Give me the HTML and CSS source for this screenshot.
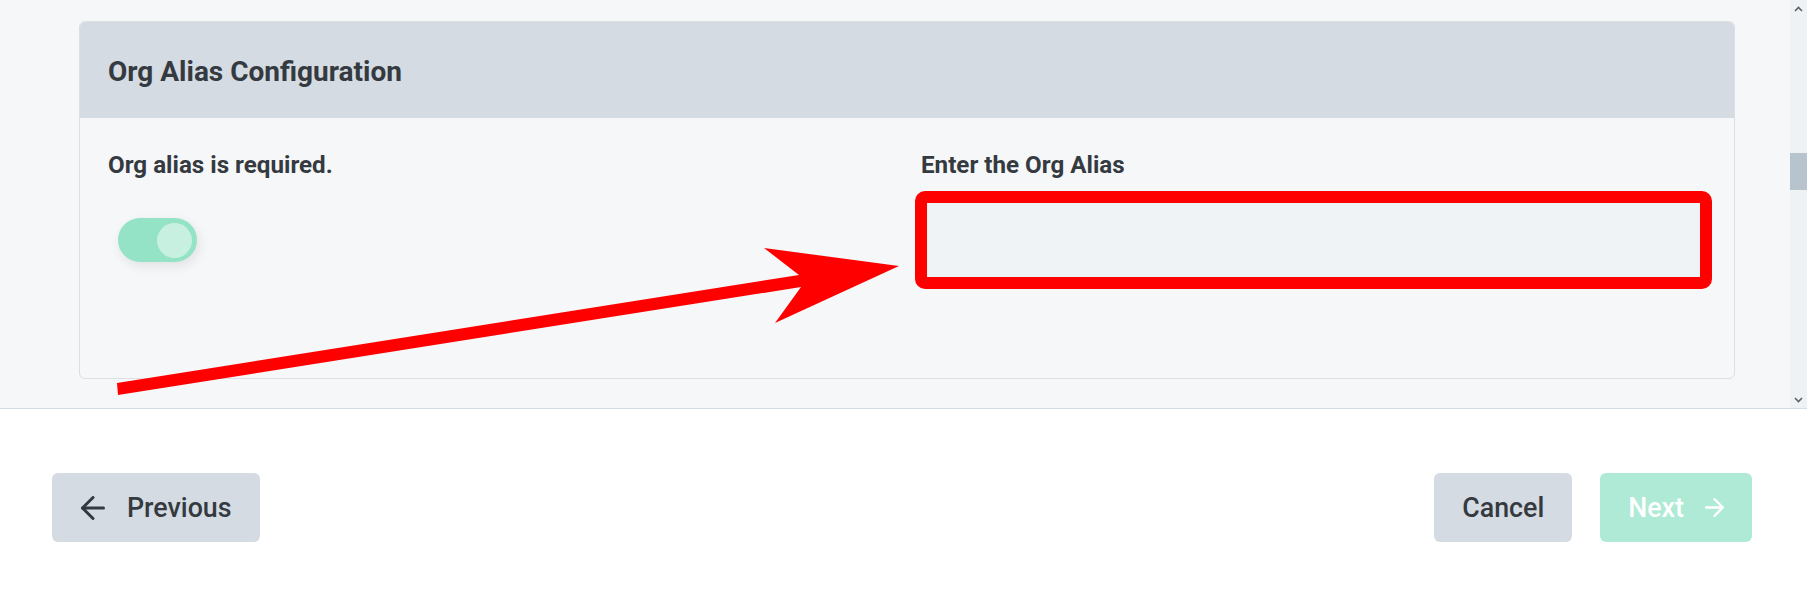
FILE: index.html
```html
<!DOCTYPE html>
<html lang="en">
<head>
<meta charset="utf-8">
<title>Org Alias Configuration</title>
<link rel="stylesheet" href="styles.css">
</head>
<body>
<div class="page">
  <div class="scroll-area">
    <div class="scroll-content">
      <section class="card">
        <header class="card-header">
          <h2 class="card-title">Org Alias Configuration</h2>
        </header>
        <div class="card-body">
          <div class="col">
            <label class="field-label">Org alias is required.</label>
            <span class="toggle"><span class="knob"></span></span>
          </div>
          <div class="col">
            <label class="field-label" for="alias">Enter the Org Alias</label>
            <div class="input-wrap">
              <input id="alias" class="text-input" type="text">
              <span class="highlight"></span>
            </div>
          </div>
        </div>
      </section>
    </div>
    <div class="scrollbar">
      <span class="sb-btn">
        <svg width="9" height="6" viewBox="0 0 9 6"><path d="M1 5 L4.5 1.5 L8 5" fill="none" stroke="#5b6168" stroke-width="1.6"/></svg>
      </span>
      <span class="sb-gap"></span>
      <span class="sb-thumb"></span>
      <span class="sb-btn sb-down">
        <svg width="9" height="6" viewBox="0 0 9 6"><path d="M1 1 L4.5 4.5 L8 1" fill="none" stroke="#5b6168" stroke-width="1.6"/></svg>
      </span>
    </div>
  </div>
  <footer class="footer">
    <button class="btn btn-secondary btn-prev" type="button">
      <svg class="icon-prev" width="24" height="24" viewBox="4 4 16 16" fill="none" stroke="currentColor" stroke-width="2" stroke-linecap="round" stroke-linejoin="round"><line x1="19" y1="12" x2="5" y2="12"/><polyline points="12 19 5 12 12 5"/></svg>
      <span>Previous</span>
    </button>
    <span class="spacer"></span>
    <button class="btn btn-secondary" type="button">Cancel</button>
    <button class="btn btn-next" type="button">
      <span>Next</span>
      <svg class="icon-next" width="19" height="19" viewBox="4 4 16 16" fill="none" stroke="currentColor" stroke-width="2" stroke-linecap="round" stroke-linejoin="round"><line x1="5" y1="12" x2="19" y2="12"/><polyline points="12 5 19 12 12 19"/></svg>
    </button>
  </footer>
  <svg class="annotation" width="1807" height="606" viewBox="0 0 1807 606">
    <polygon fill="#ff0000" points="117,383 799,275 764,248 899,266 775,323 801,287 118,395"/>
  </svg>
</div>
</body>
</html>
```

FILE: styles.css
```css
* { box-sizing: border-box; }

html, body {
  margin: 0;
  padding: 0;
  background: #ffffff;
}

body {
  font-family: Roboto, "Liberation Sans", Arial, sans-serif;
  color: #343a40;
}

.page {
  position: relative;
  width: 1807px;
  height: 606px;
  overflow: hidden;
  background: #ffffff;
}

.scroll-area {
  display: flex;
  height: 409px;
  background: #f6f7f9;
  border-bottom: 1px solid #d3dde6;
}

.scroll-content {
  flex: 1;
  padding: 21px 55px 0 79px;
  overflow: hidden;
}

.card {
  background: #f6f7f9;
  border: 1px solid #dcdfe3;
  border-radius: 6px;
  overflow: hidden;
}

.card-header {
  display: flex;
  align-items: center;
  height: 96px;
  padding: 2px 28px 0;
  background: #d4dbe2;
}

.card-title {
  margin: 0;
  font-size: 28px;
  font-weight: 700;
  color: #343a40;
}

.card-body {
  display: grid;
  grid-template-columns: 1fr 1fr;
  column-gap: 28px;
  padding: 33px 28px 95px;
}

.col {
  display: flex;
  flex-direction: column;
  align-items: flex-start;
}

.field-label {
  display: block;
  font-size: 24.2px;
  font-weight: 700;
  line-height: 28px;
  color: #343a40;
}

.toggle {
  display: flex;
  justify-content: flex-end;
  align-items: center;
  width: 79px;
  height: 44px;
  margin: 39px 0 0 10px;
  padding: 0 5px;
  border-radius: 22px;
  background: #94e3c7;
  box-shadow: 2px 4px 12px rgba(0, 0, 0, 0.09);
}

.knob {
  width: 35px;
  height: 35px;
  border-radius: 50%;
  background: #c7f0e1;
}

.input-wrap {
  position: relative;
  align-self: stretch;
  height: 86px;
  margin-top: 18px;
}

.text-input {
  display: block;
  width: 100%;
  height: 100%;
  border: 1px solid #d0d7de;
  border-radius: 6px;
  background: #eff3f6;
  font: inherit;
}

.highlight {
  position: absolute;
  inset: -6px;
  border: 12px solid #ff0000;
  border-radius: 10px;
  pointer-events: none;
}

.scrollbar {
  display: flex;
  flex-direction: column;
  width: 17px;
  background: #eef2f5;
}

.sb-btn {
  display: flex;
  align-items: center;
  justify-content: center;
  width: 17px;
  height: 17px;
}

.sb-gap {
  height: 136px;
}

.sb-thumb {
  width: 17px;
  height: 37px;
  background: #b7c4cd;
}

.sb-down {
  margin-top: auto;
}

.footer {
  display: flex;
  align-items: center;
  height: 197px;
  padding: 0 55px 0 52px;
}

.spacer {
  flex: 1;
}

.btn {
  display: inline-flex;
  align-items: center;
  height: 69px;
  padding: 0 28px;
  border: none;
  border-radius: 6px;
  font-family: Roboto, "Liberation Sans", Arial, sans-serif;
  font-size: 26.8px;
  font-weight: 500;
  cursor: pointer;
}

.btn-secondary {
  background: #d4dbe2;
  color: #343a40;
}

.btn-prev {
  padding-left: 29px;
  gap: 22px;
}

.btn-next {
  margin-left: 28px;
  gap: 21px;
  background: #aeead5;
  color: #ffffff;
}

.annotation {
  position: absolute;
  left: 0;
  top: 0;
  pointer-events: none;
}
```
